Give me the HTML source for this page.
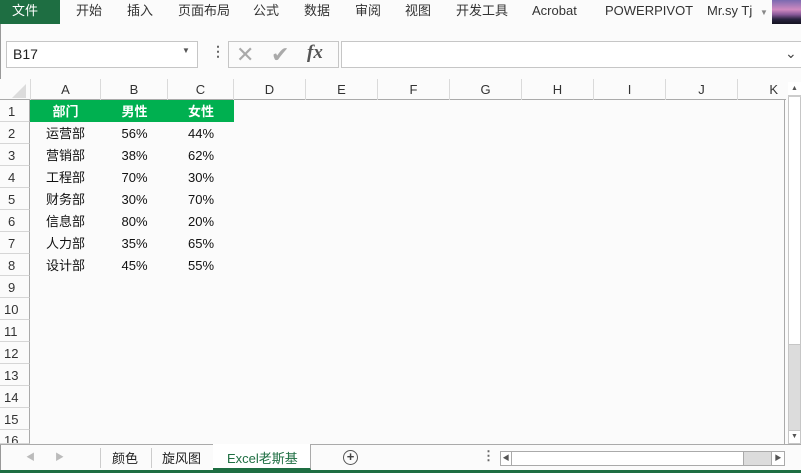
<!DOCTYPE html>
<html><head><meta charset="utf-8"><style>
*{margin:0;padding:0;box-sizing:border-box}
body{width:801px;height:473px;background:#fbfbfb;position:relative;overflow:hidden;font-family:"Liberation Sans","Noto Sans CJK SC",sans-serif;font-size:13px;color:#222}
.a{position:absolute}
.tab{position:absolute;top:0;height:24px;line-height:22px;font-size:13px;color:#333}
.ch{position:absolute;top:79px;height:21px;line-height:22px;text-align:center;font-size:13px;color:#333;border-right:1px solid #dadada}
.rh{position:absolute;left:0;width:30px;height:22px;line-height:23px;text-align:left;padding-left:8px;font-size:13px;color:#333;border-bottom:1px solid #d6d6d6;border-right:1px solid #aaa;background:#fbfbfb}
.c{position:absolute;height:22px;line-height:23px;text-align:center;font-size:13px;color:#111}
.h{color:#fff;font-weight:bold}
</style></head><body>
<div class="a" style="left:0;top:0;width:1px;height:473px;background:#999"></div>
<div class="a" style="left:0;top:0;width:60px;height:24px;background:#1e6e42"></div>
<div class="tab" style="left:12px;color:#fff">文件</div>
<div class="tab" style="left:76px">开始</div>
<div class="tab" style="left:127px">插入</div>
<div class="tab" style="left:178px">页面布局</div>
<div class="tab" style="left:253px">公式</div>
<div class="tab" style="left:304px">数据</div>
<div class="tab" style="left:355px">审阅</div>
<div class="tab" style="left:405px">视图</div>
<div class="tab" style="left:456px">开发工具</div>
<div class="tab" style="left:532px">Acrobat</div>
<div class="tab" style="left:605px">POWERPIVOT</div>
<div class="tab" style="left:707px">Mr.sy Tj</div>
<div class="a" style="left:760px;top:8px;font-size:8px;color:#888">▼</div>
<div class="a" style="left:772px;top:0;width:29px;height:24px;background:linear-gradient(#7a6ab0,#d08ac0 40%,#8a5a9a 60%,#2a2440 80%,#141220)"></div>

<div class="a" style="left:6px;top:41px;width:192px;height:27px;border:1px solid #c6c6c6;background:#fff"></div>
<div class="a" style="left:13px;top:46px;font-size:14px">B17</div>
<div class="a" style="left:182px;top:46px;font-size:8px;color:#555">▼</div>
<div class="a" style="left:211px;top:43px;font-size:14px;color:#666;font-weight:bold">⋮</div>
<div class="a" style="left:228px;top:41px;width:111px;height:27px;border:1px solid #c6c6c6;background:#fbfbfb"></div>
<div class="a" style="left:236px;top:42px;font-size:22px;color:#aaa">✕</div>
<div class="a" style="left:271px;top:42px;font-size:22px;color:#aaa">✔</div>
<div class="a" style="left:307px;top:42px;font-size:19px;color:#555;font-family:'Liberation Serif',serif;font-style:italic;font-weight:bold">fx</div>
<div class="a" style="left:341px;top:41px;width:461px;height:27px;border:1px solid #c6c6c6;background:#fff"></div>
<div class="a" style="left:785px;top:45px;font-size:14px;color:#444">⌄</div>

<div class="a" style="left:0;top:79px;width:786px;height:21px;background:#fbfbfb;border-bottom:1px solid #aaa"></div>
<div class="a" style="left:12px;top:84px;width:0;height:0;border-left:14px solid transparent;border-bottom:14px solid #dcdcdc"></div>
<div class="ch" style="left:30px;width:71px;border-left:1px solid #dadada">A</div>
<div class="ch" style="left:101px;width:67px">B</div>
<div class="ch" style="left:168px;width:66px">C</div>
<div class="ch" style="left:234px;width:72px">D</div>
<div class="ch" style="left:306px;width:72px">E</div>
<div class="ch" style="left:378px;width:72px">F</div>
<div class="ch" style="left:450px;width:72px">G</div>
<div class="ch" style="left:522px;width:72px">H</div>
<div class="ch" style="left:594px;width:72px">I</div>
<div class="ch" style="left:666px;width:72px">J</div>
<div class="ch" style="left:738px;width:46px;text-align:right;padding-right:6px;border-right:none">K</div>
<div class="a" style="left:784px;top:100px;width:1px;height:344px;background:#aaa"></div>

<div class="rh" style="top:100px">1</div><div class="rh" style="top:122px">2</div><div class="rh" style="top:144px">3</div><div class="rh" style="top:166px">4</div><div class="rh" style="top:188px">5</div><div class="rh" style="top:210px">6</div><div class="rh" style="top:232px">7</div><div class="rh" style="top:254px">8</div><div class="rh" style="top:276px">9</div><div class="rh" style="top:298px;padding-left:4px">10</div><div class="rh" style="top:320px;padding-left:4px">11</div><div class="rh" style="top:342px;padding-left:4px">12</div><div class="rh" style="top:364px;padding-left:4px">13</div><div class="rh" style="top:386px;padding-left:4px">14</div><div class="rh" style="top:408px;padding-left:4px">15</div><div class="rh" style="top:430px;height:14px;line-height:21px;overflow:hidden;padding-left:4px">16</div>

<div class="a" style="left:30px;top:100px;width:204px;height:22px;background:#00b050"></div>
<div class="c h" style="left:30px;top:100px;width:71px">部门</div>
<div class="c h" style="left:101px;top:100px;width:67px">男性</div>
<div class="c h" style="left:168px;top:100px;width:66px">女性</div>

<div class="c" style="left:30px;top:122px;width:71px">运营部</div><div class="c" style="left:101px;top:122px;width:67px">56%</div><div class="c" style="left:168px;top:122px;width:66px">44%</div>
<div class="c" style="left:30px;top:144px;width:71px">营销部</div><div class="c" style="left:101px;top:144px;width:67px">38%</div><div class="c" style="left:168px;top:144px;width:66px">62%</div>
<div class="c" style="left:30px;top:166px;width:71px">工程部</div><div class="c" style="left:101px;top:166px;width:67px">70%</div><div class="c" style="left:168px;top:166px;width:66px">30%</div>
<div class="c" style="left:30px;top:188px;width:71px">财务部</div><div class="c" style="left:101px;top:188px;width:67px">30%</div><div class="c" style="left:168px;top:188px;width:66px">70%</div>
<div class="c" style="left:30px;top:210px;width:71px">信息部</div><div class="c" style="left:101px;top:210px;width:67px">80%</div><div class="c" style="left:168px;top:210px;width:66px">20%</div>
<div class="c" style="left:30px;top:232px;width:71px">人力部</div><div class="c" style="left:101px;top:232px;width:67px">35%</div><div class="c" style="left:168px;top:232px;width:66px">65%</div>
<div class="c" style="left:30px;top:254px;width:71px">设计部</div><div class="c" style="left:101px;top:254px;width:67px">45%</div><div class="c" style="left:168px;top:254px;width:66px">55%</div>

<div class="a" style="left:788px;top:82px;width:13px;height:362px;background:#dcdcdc;border:1px solid #c6c6c6"></div>
<div class="a" style="left:788px;top:82px;width:13px;height:263px;background:#fff;border:1px solid #c6c6c6"></div>
<div class="a" style="left:788px;top:82px;width:13px;height:15px;border-bottom:2px solid #ccc;background:#fff;font-size:7px;color:#555;text-align:center;line-height:13px">▲</div>
<div class="a" style="left:788px;top:430px;width:13px;height:14px;background:#fff;border:1px solid #c6c6c6;font-size:7px;color:#555;text-align:center;line-height:12px">▼</div>

<div class="a" style="left:0;top:444px;width:801px;height:1px;background:#aaa"></div>
<div class="a" style="left:26px;top:450px;font-size:9px;color:#bbb">◀</div>
<div class="a" style="left:55px;top:450px;font-size:9px;color:#bbb">▶</div>
<div class="a" style="left:100px;top:448px;width:1px;height:20px;background:#ccc"></div>
<div class="a" style="left:112px;top:448px;font-size:13px">颜色</div>
<div class="a" style="left:151px;top:448px;width:1px;height:20px;background:#ccc"></div>
<div class="a" style="left:162px;top:448px;font-size:13px">旋风图</div>
<div class="a" style="left:213px;top:444px;width:1px;height:24px;background:#aaa"></div>
<div class="a" style="left:213px;top:444px;width:98px;height:26px;background:#fff;border-right:1px solid #aaa;border-bottom:2px solid #1e6e42"></div>
<div class="a" style="left:227px;top:448px;font-size:13px;color:#1e6e42">Excel老斯基</div>
<div class="a" style="left:343px;top:450px;width:15px;height:15px;border:1.5px solid #555;border-radius:50%;text-align:center;line-height:12px;font-size:13px;color:#444;font-weight:bold">+</div>
<div class="a" style="left:482px;top:448px;font-size:13px;color:#666;font-weight:bold">⋮</div>
<div class="a" style="left:500px;top:451px;width:285px;height:15px;border:1px solid #aaa;background:#dcdcdc"></div>
<div class="a" style="left:500px;top:451px;width:244px;height:15px;border:1px solid #aaa;background:#fff"></div>
<div class="a" style="left:500px;top:451px;width:12px;height:15px;border:1px solid #aaa;font-size:7px;text-align:center;line-height:13px;color:#555">◀</div>
<div class="a" style="left:771px;top:451px;width:14px;height:15px;border:1px solid #aaa;background:#fff;font-size:7px;text-align:center;line-height:13px;color:#555">▶</div>
<div class="a" style="left:0;top:470px;width:801px;height:3px;background:#1e6e42"></div>
</body></html>
